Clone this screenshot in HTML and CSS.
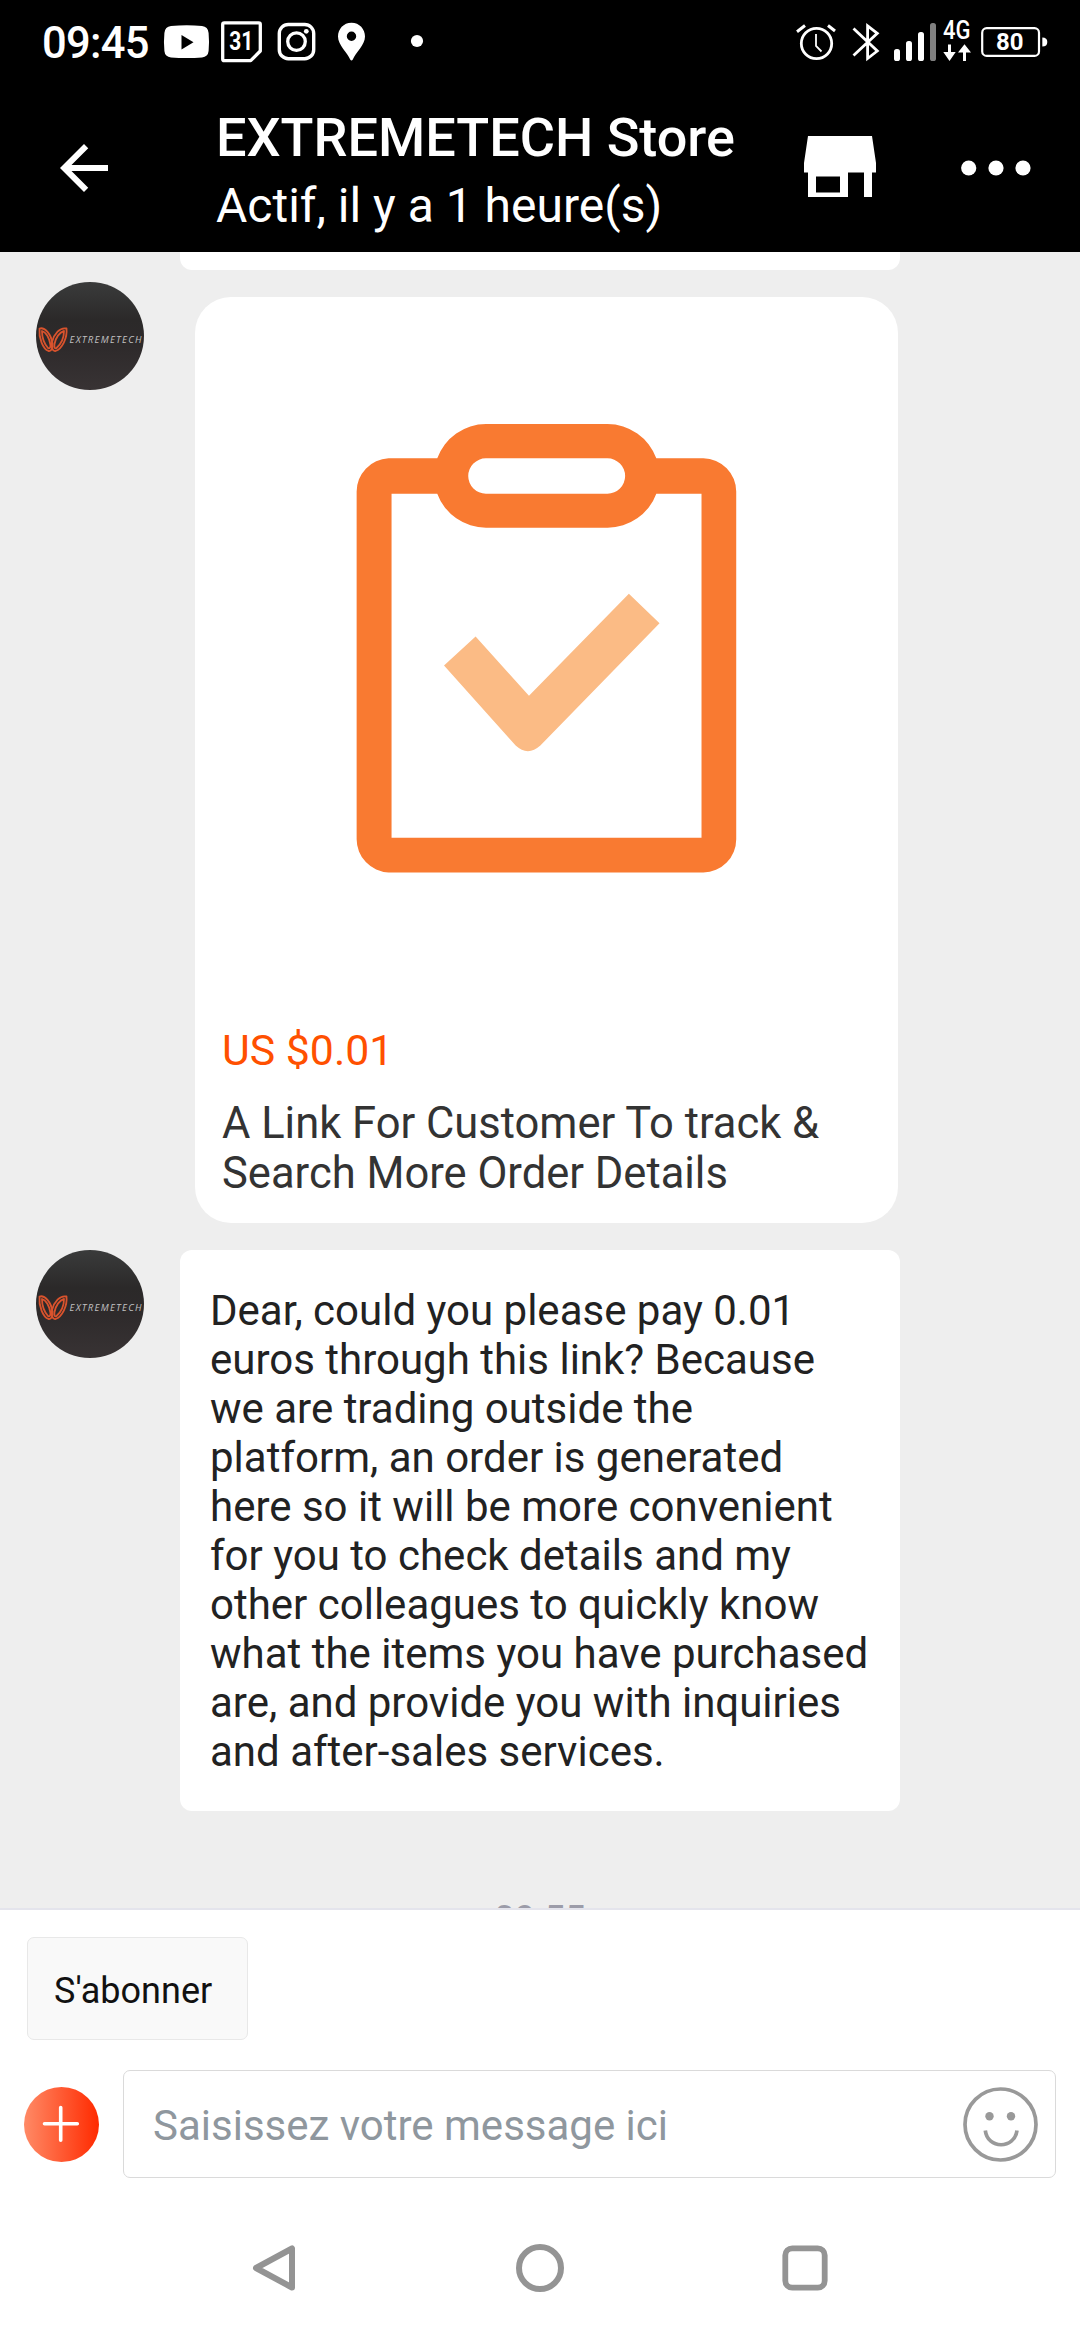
FILE: index.html
```html
<!DOCTYPE html>
<html lang="fr">
<head>
<meta charset="utf-8">
<title>EXTREMETECH Store</title>
<link rel="stylesheet" href="styles.css">
</head>
<body>
<svg class="defs" aria-hidden="true">
  <defs>
    <linearGradient id="avatar-bg" x1="0" y1="0" x2="0" y2="1">
      <stop offset="0" stop-color="#3a3b3b"/>
      <stop offset=".35" stop-color="#2b2929"/>
      <stop offset=".6" stop-color="#2e2a2b"/>
      <stop offset="1" stop-color="#383334"/>
    </linearGradient>
    <symbol id="avatar" viewBox="0 0 108 108">
      <circle cx="54" cy="54" r="54" fill="url(#avatar-bg)"/>
      <g fill="none" stroke="#d9532d" stroke-width="1.800" stroke-linejoin="round">
        <path d="M3.500 46.500C9 45 15 52 16.500 61.500C17 66 15.500 69.500 12.500 69C7 67 2.500 56 3.500 46.500Z"/>
        <path d="M6 49C10 50 13.500 56 14.500 63C14.500 66 13.500 67 12 66C8.500 62 6 55 6 49Z"/>
        <path d="M30.500 46.500C24 45 18 52 16 60C15 65 16.500 69.500 19.500 69C26 67 31.500 56 30.500 46.500Z"/>
        <path d="M28 49C23.500 50 19.500 56 18.500 62C18 66 19 67 20.500 66C25 62 28 55 28 49Z"/>
      </g>
      <text class="avatar-name" x="33.500" y="61.300" textLength="72" lengthAdjust="spacing">EXTREMETECH</text>
    </symbol>
  </defs>
</svg>

<header class="top">
  <div class="status">
    <span class="clock">09:45</span>
    <svg class="status-left" viewBox="160 14 270 56">
      <path fill="#fff" d="M171 26Q187 24.600 202 26Q208 26.500 208.600 33Q209.500 42 208.600 51Q208 57 202 57.400Q187 58.800 171 57.400Q165 57 164.400 51Q163.500 42 164.400 33Q165 26.500 171 26Z"/>
      <path fill="#000" d="M181.500 35V49.500L193.500 42.200Z"/>
      <path fill="none" stroke="#fff" stroke-width="3.300" stroke-linejoin="round" d="M224.300 22.800H258.700Q260.300 22.800 260.300 24.400V51L250.700 60.700H224.300Q222.700 60.700 222.700 59V24.400Q222.700 22.800 224.300 22.800ZM250.700 60.700L260.300 51"/>
      <text class="day" x="229.300" y="50" textLength="24" lengthAdjust="spacingAndGlyphs">31</text>
      <rect x="279.300" y="24.500" width="34.400" height="34.200" rx="9" fill="none" stroke="#fff" stroke-width="3.400"/>
      <circle cx="296.500" cy="41.600" r="8.800" fill="none" stroke="#fff" stroke-width="3.300"/>
      <circle cx="306.300" cy="31.300" r="2.400" fill="#fff"/>
      <path fill="#fff" fill-rule="evenodd" d="M351.500 22.700C343.500 22.700 338 29 338 36.500C338 45 347.500 53 350.200 59.500Q351.500 61.500 352.800 59.500C355.500 53 365 45 365 36.500C365 29 359.500 22.700 351.500 22.700ZM351.500 31.600A4.700 4.700 0 1 1 351.500 41A4.700 4.700 0 1 1 351.500 31.600Z"/>
      <circle cx="417" cy="41" r="6.100" fill="#fff"/>
    </svg>
    <svg class="status-right" viewBox="790 14 264 56">
      <g fill="none" stroke="#fff" stroke-width="2.800">
        <circle cx="816.500" cy="43.500" r="15.200"/>
        <path d="M816 34V46L821.500 51.500" stroke-width="1.800"/>
        <path d="M797 31.700L805 25.500M828 25.500L835 31" stroke-width="3"/>
        <path d="M853.500 28.500L877.300 51L867.600 58.500V25.800L877.300 33.300L853.500 55.500"/>
      </g>
      <g fill="#fff">
        <rect x="894" y="49" width="6" height="12" rx="2.600"/>
        <rect x="906" y="41" width="6" height="20" rx="2.600"/>
        <rect x="918" y="32" width="6" height="29" rx="2.600"/>
        <rect x="930" y="23" width="6" height="38" rx="2.600" fill="#808080"/>
        <path d="M948 44.500H951V52H955.700L949.500 61L943.300 52H948ZM963 61H966V52.500H971L964.500 44.300L958 52.500H963Z"/>
        <path d="M1042.300 37.500Q1047.300 37.500 1047.300 42T1042.300 46.500Z"/>
      </g>
      <text class="net" x="943" y="39" textLength="27.500" lengthAdjust="spacingAndGlyphs">4G</text>
      <rect x="982.200" y="28.200" width="56.800" height="27.700" rx="4.500" fill="none" stroke="#fff" stroke-width="2.200"/>
      <text class="batt" x="996" y="50.300" textLength="27.500" lengthAdjust="spacingAndGlyphs">80</text>
    </svg>
  </div>
  <div class="bar">
    <svg class="back" viewBox="0 0 24 24"><path fill="#fff" d="M20 11H7.830l5.590-5.590L12 4l-8 8 8 8 1.410-1.410L7.830 13H20z"/></svg>
    <div class="who">
      <h1>EXTREMETECH Store</h1>
      <p>Actif, il y a 1 heure(s)</p>
    </div>
    <svg class="shop" viewBox="0 0 72 61"><path fill="#fff" fill-rule="evenodd" d="M4 0H68L72 27V36.500H68V61H60V36.500H44V61H4V36.500H0V27ZM12 40.500V56.500H36V40.500Z"/></svg>
    <svg class="more" viewBox="0 0 70 16"><g fill="#fff"><circle cx="7.700" cy="8" r="7.600"/><circle cx="35" cy="8" r="7.600"/><circle cx="62" cy="8" r="7.600"/></g></svg>
  </div>
</header>

<main class="chat">
  <div class="bubble-tail"></div>
  <div class="row">
    <svg class="avatar"><use href="#avatar"/></svg>
    <article class="card">
      <svg class="card-pic" viewBox="195 297 703 703">
        <g transform="translate(330 400) scale(1.009) translate(-330 -400)">
          <path fill="#f97a31" fill-rule="evenodd" d="M388 457.800H436.300A51.400 51.400 0 0 1 484.600 423.800H605A51.400 51.400 0 0 1 653.400 457.800H700A33 33 0 0 1 732.600 491V835A33 33 0 0 1 700 868.200H388A33 33 0 0 1 356.400 835V491A33 33 0 0 1 388 457.800ZM391 492.800V833.800H698.200V492.800H653.400A51.400 51.400 0 0 1 605 526.500H484.600A51.400 51.400 0 0 1 436.300 492.800ZM484.500 457.800A17.500 17.500 0 0 0 484.500 492.800H605A17.500 17.500 0 0 0 605 457.800Z"/>
          <path fill="#fbbb85" d="M443 663.200L474.300 634.500L527.200 693L626.200 591.900L656.600 621.300L538.500 742.500Q526 753.500 514 742.500Z"/>
        </g>
      </svg>
      <div class="price">US $0.01</div>
      <div class="name">A Link For Customer To track &amp;<br>Search More Order Details</div>
    </article>
  </div>
  <div class="row">
    <svg class="avatar"><use href="#avatar"/></svg>
    <p class="bubble">Dear, could you please pay 0.01<br>euros through this link? Because<br>we are trading outside the<br>platform, an order is generated<br>here so it will be more convenient<br>for you to check details and my<br>other colleagues to quickly know<br>what the items you have purchased<br>are, and provide you with inquiries<br>and after-sales services.</p>
  </div>
  <time class="stamp">09:55</time>
</main>

<footer class="bottom">
  <button class="chip">S'abonner</button>
  <div class="composer">
    <svg class="plus" viewBox="0 0 75 75">
      <defs><linearGradient id="plus-bg"><stop offset="0" stop-color="#ff8a66"/><stop offset="1" stop-color="#ff2a00"/></linearGradient></defs>
      <circle cx="37.500" cy="37.500" r="37.500" fill="url(#plus-bg)"/>
      <path d="M20.500 36.800H53.300M36.700 20.500V53.300" stroke="#fff" stroke-width="3.600" stroke-linecap="round"/>
    </svg>
    <div class="field">
      <span>Saisissez votre message ici</span>
      <svg class="smile" viewBox="0 0 75 75">
        <g fill="none" stroke="#999" stroke-width="3.700"><circle cx="37.500" cy="37.500" r="35.500"/><path d="M22.300 43.500C24.500 62.500 51.500 62.500 54 43.500"/></g>
        <g fill="#999"><circle cx="26.500" cy="29.300" r="4.200"/><circle cx="48" cy="29.300" r="4.200"/></g>
      </svg>
    </div>
  </div>
  <nav class="nav">
    <svg viewBox="0 0 48 48"><path d="M42 4.500V43.500L6 24Z" fill="none" stroke="#949494" stroke-width="6" stroke-linejoin="round"/></svg>
    <svg viewBox="0 0 48 48"><circle cx="24" cy="24" r="21" fill="none" stroke="#949494" stroke-width="6"/></svg>
    <svg viewBox="0 0 48 48"><rect x="4.300" y="4.300" width="39.400" height="39.400" rx="7" fill="none" stroke="#949494" stroke-width="5.800"/></svg>
  </nav>
</footer>
</body>
</html>
```
FILE: styles.css
```css
* { box-sizing: border-box; margin: 0; padding: 0; }

body {
  width: 1080px;
  height: 2340px;
  display: flex;
  flex-direction: column;
  overflow: hidden;
  background: #fff;
  font-family: Roboto, "Liberation Sans", sans-serif;
}

svg { display: block; flex: none; }
.defs { width: 0; height: 0; position: absolute; }

/* Status bar and title bar */
.top { height: 252px; flex: none; background: #000; color: #fff; }
.status { height: 84px; display: flex; align-items: center; padding: 0 26px 0 42px; }
.clock { width: 118px; font-size: 43.500px; font-weight: 500; line-height: 52px; letter-spacing: -0.700px; padding-top: 3px; }
.status-left { width: 270px; height: 56px; }
.status-right { width: 264px; height: 56px; margin-left: auto; }
.day { fill: #fff; font-size: 26px; font-weight: 700; }
.net { fill: #fff; font-size: 25px; font-weight: 500; }
.batt { fill: #fff; font-size: 24px; font-weight: 700; }

.bar { height: 168px; display: flex; align-items: center; padding: 0 49px 0 48px; }
.back { width: 72px; height: 72px; }
.who { width: 587px; margin-left: 96px; padding-top: 6px; }
.who h1 { font-size: 54px; font-weight: 500; line-height: 64px; white-space: nowrap; }
.who p { font-size: 48px; line-height: 60px; margin-top: 6px; white-space: nowrap; }
.shop { width: 72px; height: 61px; margin: -3px 0 0 1px; }
.more { width: 70px; height: 16px; margin-left: auto; }

/* Conversation */
.chat { height: 1656px; flex: none; overflow: hidden; background: #eee; display: flex; flex-direction: column; }
.bubble-tail { width: 720px; height: 18px; flex: none; margin-left: 180px; background: #fff; border-radius: 0 0 12px 12px; }
.row { display: flex; align-items: flex-start; padding-left: 36px; margin-top: 12px; flex: none; }
.row + .row { margin-top: 27px; }
.avatar { width: 108px; height: 108px; }
.avatar-name { fill: #c2c2c2; font: italic 9.500px "Open Sans", sans-serif; }
.card { width: 703px; height: 926px; margin: 15px 0 0 51px; background: #fff; border-radius: 36px; overflow: hidden; }
.card-pic { width: 703px; height: 703px; }
.price { margin: 25px 27px 0; font-size: 42.800px; line-height: 50px; color: #ff5000; }
.name { margin: 24px 27px 0; font-size: 43.500px; line-height: 50px; color: #333; white-space: nowrap; }
.bubble { width: 720px; height: 561px; margin-left: 36px; padding: 36px 30px; background: #fff; border-radius: 12px; font-size: 42px; line-height: 49px; color: #222; white-space: nowrap; }
.stamp { align-self: center; flex: none; margin-top: 87px; font-size: 36px; line-height: 42px; font-weight: 500; color: #9c9ca9; }

/* Composer and system navigation */
.bottom { height: 432px; flex: none; border-top: 2px solid #e4e4ec; padding-top: 27px; }
.chip { display: flex; align-items: center; width: 221px; height: 103px; margin-left: 27px; padding: 4px 26px 0; border: 1px solid #e8e8e8; border-radius: 7px; background: #f9f9f9; color: #111; font: 36px Roboto, sans-serif; }
.composer { display: flex; align-items: center; margin-top: 30px; padding-left: 24px; }
.plus { width: 75px; height: 75px; }
.field { width: 933px; height: 108px; margin-left: 24px; padding: 0 17px 0 29px; display: flex; align-items: center; justify-content: space-between; border: 1px solid #dadada; border-radius: 7px; font-size: 42px; color: #8f979e; }
.field span { padding-top: 2px; }
.smile { width: 75px; height: 75px; }
.nav { display: flex; justify-content: space-between; margin-top: 66px; padding: 0 251px 0 250px; }
.nav svg { width: 48px; height: 48px; }
```
